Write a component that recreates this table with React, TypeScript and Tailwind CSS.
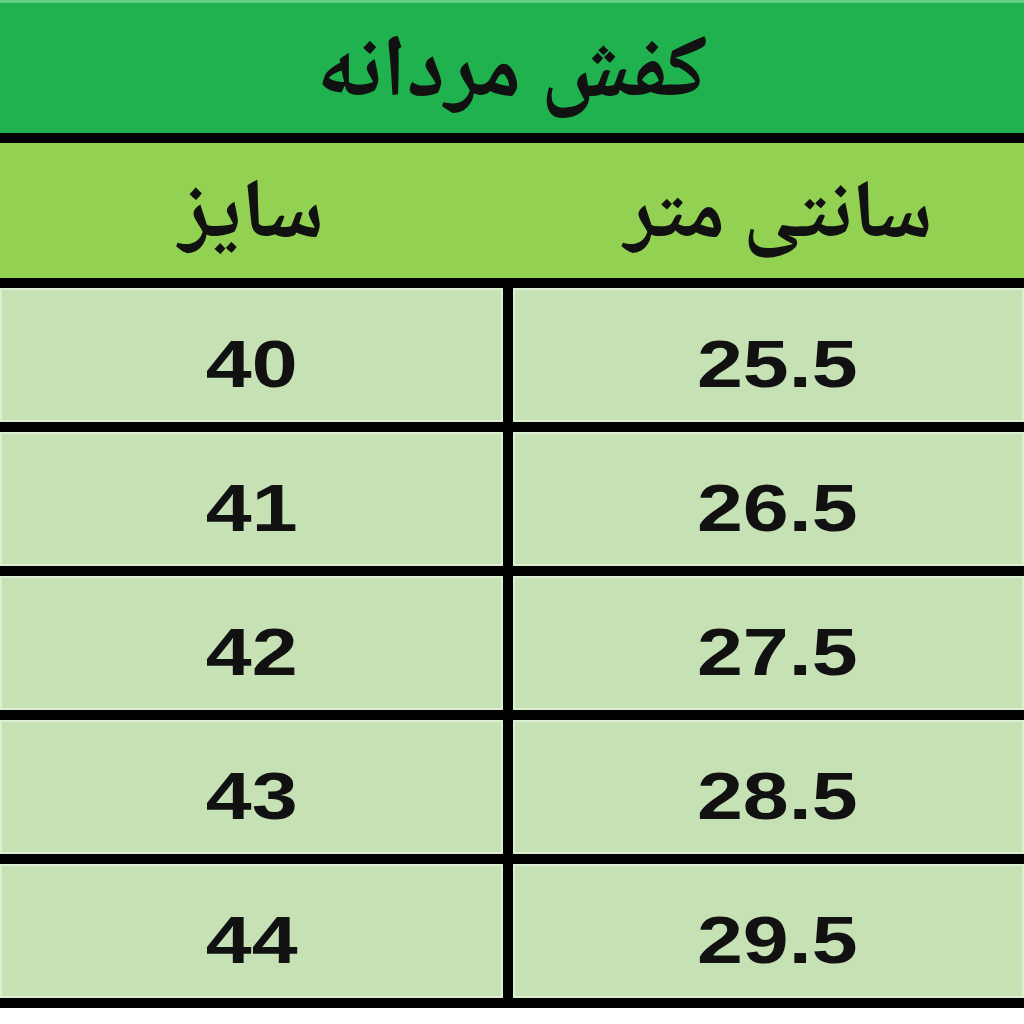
const rows = [
	{ size: '40', cm: '25.5' },
	{ size: '41', cm: '26.5' },
	{ size: '42', cm: '27.5' },
	{ size: '43', cm: '28.5' },
	{ size: '44', cm: '29.5' },
];

const persian = "font-['Noto_Naskh_Arabic','Noto_Sans_Arabic','DejaVu_Sans',sans-serif] font-bold text-[#111]";
const digits = "inline-block scale-x-125 font-['Liberation_Sans',Arial,sans-serif] text-[66px] font-bold leading-none text-[#111]";
const cell = 'flex h-[134px] items-center justify-center border-2 border-[#ddeed3] bg-[#c6e2b5] pt-[18px]';

export default function App() {
	return (
		<div className="h-[1024px] w-[1024px] bg-white">
			<div className="flex h-[143px] items-center justify-center border-t-[3px] border-b-[10px] border-t-[#5fce86] border-b-black bg-[#1fb24f] pt-[20px]">
				<span dir="rtl" className={`${persian} text-[88px] leading-[1.2]`}>
					کفش مردانه
				</span>
			</div>
			<div className="grid h-[145px] grid-cols-[503px_1fr] gap-x-[10px] border-b-[10px] border-black bg-[#93d152]">
				<div className="flex items-center justify-center pt-[18px]">
					<span dir="rtl" className={`${persian} text-[84px] leading-[1.2]`}>
						سایز
					</span>
				</div>
				<div className="flex items-center justify-center pt-[18px] pl-[20px]">
					<span dir="rtl" className={`${persian} text-[82px] leading-[1.2]`}>
						سانتی متر
					</span>
				</div>
			</div>
			<div className="grid grid-cols-[503px_1fr] gap-x-[10px] gap-y-[10px] bg-black pb-[10px]">
				{rows.map((row) => (
					<div className="contents" key={row.size}>
						<div className={cell}>
							<span className={digits}>{row.size}</span>
						</div>
						<div className={`${cell} pl-[18px]`}>
							<span className={digits}>{row.cm}</span>
						</div>
					</div>
				))}
			</div>
		</div>
	);
}
